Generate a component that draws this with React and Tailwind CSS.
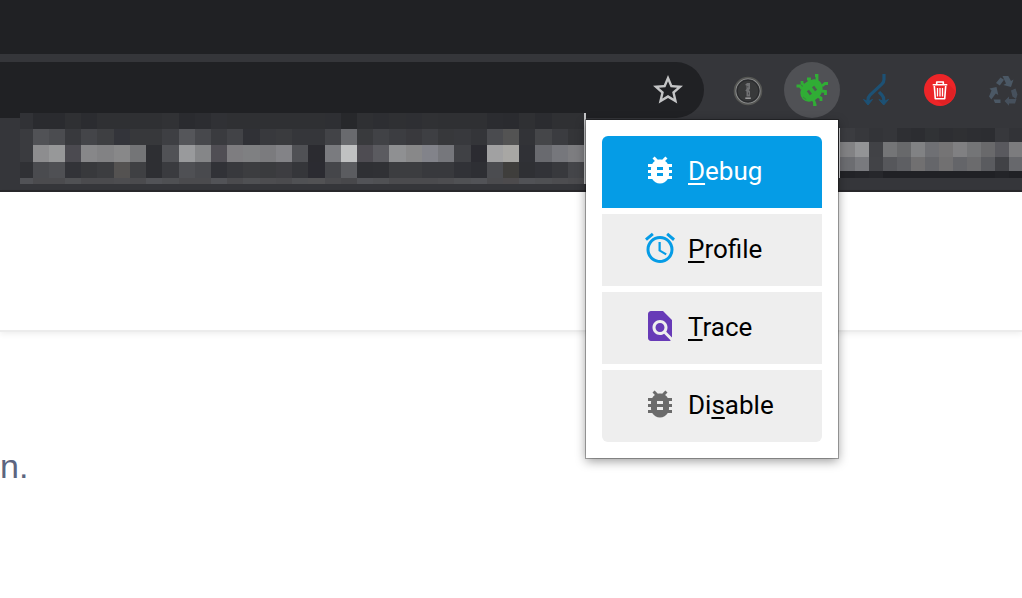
import React from "react";
import { MdAccessAlarm, MdBugReport, MdFindInPage, MdStarBorder } from "react-icons/md";

const leftRows = [
  "313236 2a2b2f 2a2b2f 2f3033 2b2c30 2f3033 2f3033 2f3033 2f3033 313235 2a2b2f 2c2d31 303135 2f3033 2f3033 2f3033 2f3033 2f3033 2f3033 2e2f33 27282b 2f3033 2d2e32 2f3033 2e2f33 303134 2f3033 2f3033 2f3033 2b2c30 2a2b2f 2f3033 2b2c30 2f3033 2f3033",
  "3a3b3f 515256 4b4c50 38393d 444549 3e3f42 33343a 37383b 37383b 3e3f43 55565a 47484c 3a3b3f 424347 303136 38393d 3a3b3e 35363a 35363a 424347 696a6e 393a3d 414246 3c3d41 39393d 3e3f43 37383b 38393d 343539 4a4b4f 535353 323337 454649 3b3c40 343538",
  "3a3b3f 8d8d8f 979899 4b4a50 878789 828284 888889 747577 2e2f33 515256 999a9c 858688 504e54 7e7d80 7f8082 7b7b7e 838387 505155 2b2b30 7a7b7f c0c1c2 4e4c52 5b5b60 8f9092 888889 82838a 76777c 404145 2b2b31 a1a1a2 a8a7a4 303136 696a6f 76777c 7d7d80",
  "303135 4a4b4f 4f5054 323338 38393c 3c3d40 545251 3f4043 2e2f33 3a3b3f 4f5054 494a4e 313237 38393d 3c3d40 3a3b3e 3d3d41 35363a 2b2b31 45464a 5b5c60 2f3034 303135 3c3d40 3c3d40 38393d 38393d 313237 2e2f34 4b4c50 3f3e3c 2f3034 323338 38393d 444549",
  "515256 4b4b4e 4b4b4e 505154 4b4b4e 4b4b4e 4d4d50 4b4b4e 525357 4f5053 4b4b4e 4b4b4e 525357 4b4b4e 4f5053 4d4d50 4b4b4e 505154 525254 4b4b4e 48484b 525357 505154 4b4b4e 4b4b4e 4b4b4e 4d4d50 505154 525357 4b4b4e 4d4b4d 515256 4f5053 4d4d50 4b4b4e",
].map((row) => row.split(" "));

const rightRows = [
  "3b3c40 37383c 333438 35363a 2e2f33 2c2d31 303235 2d2e32 2f3033 2d2e32 2c2d31 37383c 323337",
  "828284 939496 414246 747577 68696b 818284 6f7074 757475 808082 747577 69696b 59595e 7c7c7e",
  "6c6d71 797a7e 424347 56575b 5e5f63 717071 65666a 717071 646569 6b6b6d 5a5b5f 414246 67686c",
  "222327 242529 26272b 202125 202125 202125 202125 202125 202125 202125 202125 232428 202125",
].map((row) => row.split(" "));

function Mosaic({ rows, offset, cell, ends, width, height, className }) {
  return (
    <svg width={width} height={height} shapeRendering="crispEdges" aria-hidden="true" className={className}>
      {rows.map((row, r) =>
        row.map((color, c) => {
          const x = c === 0 ? 0 : offset + cell * (c - 1);
          const next = offset + cell * c;
          return (
            <rect key={r + "-" + c} x={x} y={ends[r]} width={next - x + 0.5} height={ends[r + 1] - ends[r]} fill={"#" + color} />
          );
        })
      )}
    </svg>
  );
}

function KeyholeIcon() {
  return (
    <svg width="32" height="32" viewBox="0 0 32 32" fill="none" aria-hidden="true">
      <circle cx="16" cy="17" r="13.5" stroke="#555653" strokeWidth="1.6" />
      <circle cx="16" cy="17" r="12.2" stroke="#8b8c8b" strokeWidth="1.1" />
      <circle cx="16" cy="17" r="10.8" fill="#38393a" stroke="#292a2c" />
      <path d="m13 11 2-2h3v6l-1 1 1 1.3v5.200h-3.500v-5l-1.200-1 1.200-1.500v-3.500z" fill="#707173" />
      <path d="M15.800 12v1.500M16.500 18.500v2" stroke="#48494b" strokeWidth="1" />
      <path d="M13.3 24.2h5.500" stroke="#a0a0a1" strokeWidth="1.5" />
    </svg>
  );
}

function GreenBugIcon() {
  return (
    <svg width="32" height="32" viewBox="0 0 32 32" fill="none" aria-hidden="true">
      <path
        d="M21 8V1.500h-2M26 12l3-2.500h3M13.500 9V5h-2.500M9 12 6 9.500V7M6 15l-2-3H.5M25.500 17l4 .5V21M21.500 22l3.500 2v3M17 25l1.500 3.500V31h2"
        stroke="#30ad35"
        strokeWidth="2.8"
      />
      <ellipse cx="15.500" cy="16.500" rx="12.300" ry="9.800" transform="rotate(-45 15.500 16.500)" fill="#30ad35" />
      <path d="m10.800 17.300 2.200-1.500 3 4-2.200 1.500zM16 13.200l2.200-1.500 3 4-2.200 1.500z" fill="#4d5d50" />
      <path d="m7 23 3.300 2.700" stroke="#3f7f45" strokeWidth="1" />
    </svg>
  );
}

function BranchIcon() {
  return (
    <svg width="32" height="32" viewBox="0 0 32 32" fill="none" aria-hidden="true">
      <path d="M24 0v5.500c0 2-.7 3.200-2.200 4.700L10 21.200c-1.300 1.300-2 2.600-2 4.600v3M19 18l3 3.200c1.200 1.300 1.700 2.700 1.700 4.400v3" stroke="#1d5174" strokeWidth="3.200" />
      <path d="m3.500 25.500 4.500 2 4.500-2-4.500 5.500zM19 25.500l4.700 2 4.800-2-4.800 5.500z" fill="#1d5174" stroke="#1d5174" />
    </svg>
  );
}

function TrashIcon() {
  return (
    <svg width="32" height="32" viewBox="0 0 32 32" fill="none" aria-hidden="true">
      <circle cx="16" cy="16" r="16" fill="#ed2528" />
      <path d="m23 9 8 7.500A15 15 0 0 1 19 31l-8-6 10-1z" fill="#e02124" />
      <g stroke="#fff" strokeWidth="1.600">
        <path d="M8.700 10.800h14.600M12.700 10.500V8h6.600v2.500M10.300 12l1 12.800h9.400l1-12.800" strokeLinejoin="round" />
        <path d="M13.500 14v8.500M16 14v8.500M18.500 14v8.500" strokeWidth="1.300" />
      </g>
    </svg>
  );
}

function RecycleIcon() {
  return (
    <svg width="32" height="32" viewBox="0 0 32 32" aria-hidden="true">
      <g fill="#4b5865" transform="translate(1 0)">
        <path d="m11.500 3.500 3.500 2.300-4.200 5.700-3.800-2.500zM13.500 2h5.800l2.700 5 2.500-1.500-2.500 7.500-7.700-2 2.700-1.500z" />
        <path d="m22 16.500 4.500-2 2 6-1.500 4.500-3.500-2.500zM15.500 27l4.500-4.500v2.500h7.500L26 29.500h-6v2.300z" opacity=".8" />
        <path d="M.5 14.500 7.500 13l1.800 8-2.500-1.500-4.500 6L0 22.500l2.500-6zM4.500 25.500h7V29H6z" />
      </g>
    </svg>
  );
}

function ToolButton({ label, active, children }) {
  return (
    <button
      type="button"
      aria-label={label}
      className={
        "flex size-14 shrink-0 items-center justify-center rounded-full " + (active ? "bg-[#505155]" : "bg-transparent")
      }
    >
      {children}
    </button>
  );
}

const modes = [
  { name: "Debug", before: "", hot: "D", after: "ebug", Icon: MdBugReport, box: "rounded-t-md bg-[#059ce6] text-white", tint: "text-white" },
  { name: "Profile", before: "", hot: "P", after: "rofile", Icon: MdAccessAlarm, box: "bg-[#eeeeee] text-black", tint: "text-[#059ce6]" },
  { name: "Trace", before: "", hot: "T", after: "race", Icon: MdFindInPage, box: "bg-[#eeeeee] text-black", tint: "text-[#673ab7]" },
  { name: "Disable", before: "Di", hot: "s", after: "able", Icon: MdBugReport, box: "rounded-b-md bg-[#eeeeee] text-black", tint: "text-[#6b6b6b]" },
];

function ModePopup() {
  return (
    <div className="absolute top-[120px] right-[184px] flex w-[252px] flex-col gap-1.5 bg-white p-4 shadow-[0_0_0_1px_rgba(0,0,0,0.3),0_3px_10px_rgba(0,0,0,0.4)]">
      {modes.map(({ name, before, hot, after, Icon, box, tint }) => (
        <button
          key={name}
          type="button"
          className={"flex h-[72px] items-center gap-2.5 pb-1 pl-10 font-[Roboto,sans-serif] text-[26px] leading-8 " + box}
        >
          <Icon className={"size-9 " + tint} aria-hidden="true" />
          <span className="pt-0.5">
            {before}
            <span className="underline decoration-2 underline-offset-[3px] [text-decoration-skip-ink:none]">{hot}</span>
            {after}
          </span>
        </button>
      ))}
    </div>
  );
}

export default function App() {
  return (
    <div className="relative min-h-screen overflow-hidden bg-white">
      <header className="border-b-2 border-[#29282b] bg-[#35363a]">
        <div className="h-[54px] bg-[#202124]" />
        <div className="-mr-2.5 flex h-[59px] items-start gap-4 pt-2">
          <div className="flex h-14 flex-1 items-center justify-end rounded-r-full bg-[#202124] pr-[18px]">
            <button type="button" aria-label="Bookmark this page" className="text-[#c4c5c6]">
              <MdStarBorder className="size-9" />
            </button>
          </div>
          <div className="flex gap-2">
            <ToolButton label="Passwords"><KeyholeIcon /></ToolButton>
            <ToolButton label="Debug helper" active><GreenBugIcon /></ToolButton>
            <ToolButton label="Branches"><BranchIcon /></ToolButton>
            <ToolButton label="Clear data"><TrashIcon /></ToolButton>
            <ToolButton label="Recycle"><RecycleIcon /></ToolButton>
          </div>
        </div>
        <div className="relative flex h-[77px] justify-between pl-5">
          <Mosaic rows={leftRows} offset={12.6} cell={16.22} ends={[0, 16, 32, 49, 65, 71]} width={564} height={71} className="box-content border-r-2 border-[#c5c6c8]" />
          <Mosaic rows={rightRows} offset={15} cell={14} ends={[0, 14, 29, 43, 50]} width={183} height={50} className="mt-[15px] border-l border-[#d4d5d7]" />
        </div>
      </header>
      <main>
        <div className="h-[140px] border-b-2 border-[#ececec] shadow-[0_2px_6px_rgba(0,0,0,0.07)]" />
        <p className="pt-[114px] font-['Liberation_Sans',Arial,sans-serif] text-[34px] leading-10 text-[#5c6580]">n.</p>
      </main>
      <ModePopup />
    </div>
  );
}
